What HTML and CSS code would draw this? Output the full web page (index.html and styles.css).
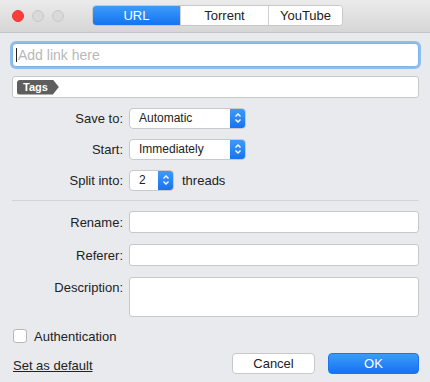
FILE: index.html
```html
<!DOCTYPE html>
<html lang="en">
<head>
  <meta charset="UTF-8">
  <title>Add Download</title>
  <link rel="stylesheet" href="styles.css">
</head>
<body>
  <div class="window">
    <div class="titlebar">
      <div class="lights">
        <span class="light red"></span>
        <span class="light"></span>
        <span class="light"></span>
      </div>
      <div class="segmented">
        <button class="seg active">URL</button>
        <button class="seg">Torrent</button>
        <button class="seg">YouTube</button>
      </div>
    </div>

    <div class="content">
      <div class="link-input"><span class="caret"></span><span class="placeholder">Add link here</span></div>
      <div class="tags-input"><span class="tag">Tags</span></div>

      <div class="options">
        <div class="row">
          <label class="lbl">Save to:</label>
          <div class="popup wide"><span>Automatic</span><span class="arrows"><svg width="8" height="12" viewBox="0 0 8 12"><path d="M1.5 4.5 L4 2 L6.5 4.5 M1.5 7.5 L4 10 L6.5 7.5" fill="none" stroke="#fff" stroke-width="1.4"/></svg></span></div>
        </div>
        <div class="row">
          <label class="lbl">Start:</label>
          <div class="popup wide"><span>Immediately</span><span class="arrows"><svg width="8" height="12" viewBox="0 0 8 12"><path d="M1.5 4.5 L4 2 L6.5 4.5 M1.5 7.5 L4 10 L6.5 7.5" fill="none" stroke="#fff" stroke-width="1.4"/></svg></span></div>
        </div>
        <div class="row">
          <label class="lbl">Split into:</label>
          <div class="popup narrow"><span>2</span><span class="arrows"><svg width="8" height="12" viewBox="0 0 8 12"><path d="M1.5 4.5 L4 2 L6.5 4.5 M1.5 7.5 L4 10 L6.5 7.5" fill="none" stroke="#fff" stroke-width="1.4"/></svg></span></div>
          <span class="suffix">threads</span>
        </div>
      </div>

      <hr class="sep">

      <div class="fields">
        <div class="row">
          <label class="lbl">Rename:</label>
          <div class="field"></div>
        </div>
        <div class="row">
          <label class="lbl">Referer:</label>
          <div class="field"></div>
        </div>
        <div class="row top">
          <label class="lbl">Description:</label>
          <div class="field tall"></div>
        </div>
      </div>

      <div class="check-row">
        <span class="checkbox"></span>
        <span>Authentication</span>
      </div>

      <div class="footer">
        <a class="default-link">Set as default</a>
        <div class="buttons">
          <button class="btn">Cancel</button>
          <button class="btn primary">OK</button>
        </div>
      </div>
    </div>
  </div>
</body>
</html>
```

FILE: styles.css
```css
body {
  margin: 0;
  font-family: "Liberation Sans", Arial, sans-serif;
  font-size: 13px;
  color: #222;
  background: #e9eaee;
}
.window {
  width: 430px;
  height: 382px;
  overflow: hidden;
}
.titlebar {
  height: 32px;
  background: linear-gradient(#ebebeb, #d6d6d6);
  border-bottom: 1px solid #c4c4c4;
  display: flex;
  align-items: flex-start;
}
.lights {
  display: flex;
  gap: 8px;
  padding: 10px 0 0 12px;
}
.light {
  width: 12px;
  height: 12px;
  border-radius: 50%;
  background: #d9d9d9;
  border: 1px solid #c9c9c9;
  box-sizing: border-box;
}
.light.red {
  background: #fc3d3a;
  border-color: #e33a36;
}
.segmented {
  display: flex;
  margin: 5px 0 0 28px;
  border: 1px solid #c8c8c8;
  border-radius: 4px;
  overflow: hidden;
  background: #fff;
  height: 21px;
  box-sizing: border-box;
}
.seg {
  border: none;
  border-left: 1px solid #d0d0d0;
  background: #fff;
  font-family: inherit;
  font-size: 13px;
  color: #222;
  padding: 0;
  width: 88px;
}
.seg:first-child {
  border-left: none;
  width: 87px;
}
.seg:last-child {
  width: 74px;
}
.seg.active {
  background: linear-gradient(#3d9bfb, #1473f0);
  color: #fff;
}
.content {
  padding: 10px 11px 0 12px;
}
.link-input {
  height: 22px;
  background: #fff;
  border: 1px solid #7eb3ea;
  border-radius: 4px;
  box-shadow: 0 0 0 2px #8ebdf0;
  display: flex;
  align-items: center;
  padding-left: 3px;
  font-size: 14px;
}
.caret {
  width: 1px;
  height: 14px;
  background: #222;
  margin-right: 1px;
}
.placeholder {
  color: #b8b8b8;
}
.tags-input {
  margin-top: 9px;
  height: 20px;
  background: #fff;
  border: 1px solid #c8c8c8;
  border-radius: 3px;
  display: flex;
  align-items: center;
  padding-left: 4px;
}
.tag {
  background: #5e5e5e;
  color: #fff;
  font-size: 11px;
  font-weight: bold;
  height: 15px;
  line-height: 15px;
  padding: 0 11px 0 6px;
  border-radius: 3px 0 0 3px;
  clip-path: polygon(0 0, calc(100% - 6px) 0, 100% 50%, calc(100% - 6px) 100%, 0 100%);
}
.row {
  display: flex;
  align-items: center;
  height: 22px;
  margin-bottom: 9px;
}
.row.top {
  align-items: flex-start;
  height: auto;
}
.row.top .lbl {
  padding-top: 3px;
}
.lbl {
  width: 111px;
  text-align: right;
  padding-right: 6px;
  box-sizing: content-box;
}
.options {
  margin-top: 9px;
}
.popup {
  height: 21px;
  background: #fff;
  border: 1px solid #c9c9c9;
  border-radius: 4px;
  box-sizing: border-box;
  display: flex;
  align-items: center;
  justify-content: space-between;
  padding-left: 9px;
  font-size: 12px;
  overflow: hidden;
}
.popup.wide {
  width: 117px;
}
.popup.narrow {
  width: 45px;
}
.arrows {
  width: 16px;
  height: 21px;
  background: linear-gradient(#3f9cfb, #1571ef);
  display: flex;
  align-items: center;
  justify-content: center;
  margin-right: -1px;
}
.suffix {
  margin-left: 8px;
}
.sep {
  border: none;
  border-top: 1px solid #d2d3d7;
  margin: 0 0 10px;
}
.field {
  flex: 1;
  height: 22px;
  background: #fff;
  border: 1px solid #c8c8c8;
  border-radius: 3px;
  box-sizing: border-box;
}
.field.tall {
  height: 40px;
}
.fields .row {
  margin-bottom: 11px;
}
.fields .row.top {
  margin-bottom: 11px;
}
.check-row {
  display: flex;
  align-items: center;
  gap: 7px;
  height: 16px;
  margin-left: 1px;
}
.checkbox {
  width: 14px;
  height: 14px;
  background: #fff;
  border: 1px solid #b8b8b8;
  border-radius: 3px;
  box-sizing: border-box;
}
.footer {
  display: flex;
  justify-content: space-between;
  align-items: center;
  margin-top: 9px;
}
.default-link {
  text-decoration: underline;
  color: #222;
  margin-left: 1px;
  margin-top: 4px;
}
.buttons {
  display: flex;
  gap: 13px;
}
.btn {
  height: 21px;
  border: 1px solid #c8c8c8;
  border-radius: 4px;
  background: #fff;
  font-family: inherit;
  font-size: 13px;
  color: #222;
  width: 83px;
  padding: 0;
}
.btn.primary {
  width: 91px;
  border-color: #1b74ee;
  background: linear-gradient(#3d9bfb, #1473f0);
  color: #fff;
}
```
